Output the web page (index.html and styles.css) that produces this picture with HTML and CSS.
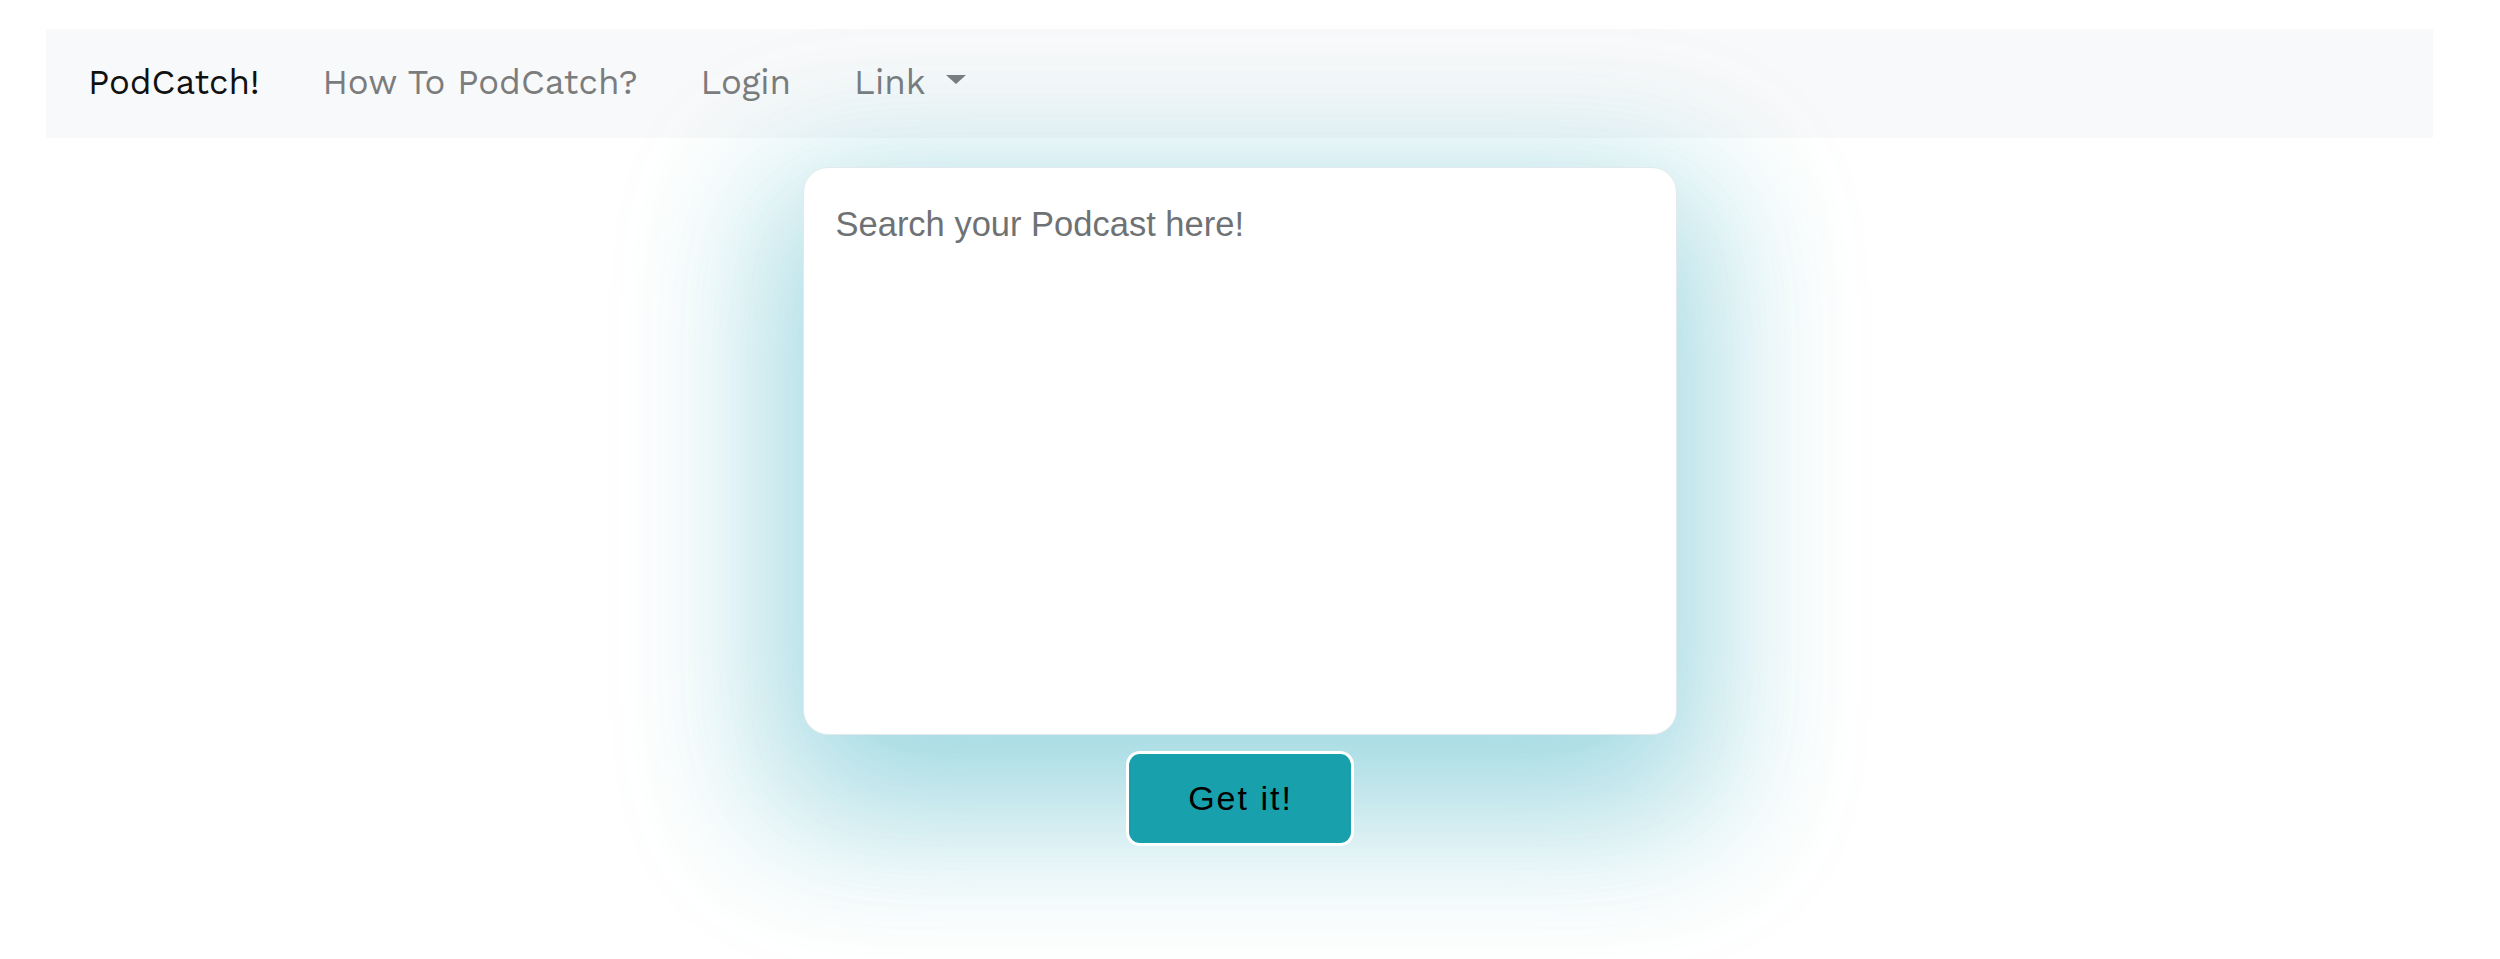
FILE: index.html
```html
<!DOCTYPE html>
<html lang="en">
<head>
<meta charset="utf-8">
<title>PodCatch!</title>
<link rel="stylesheet" href="styles.css">
</head>
<body>
  <div class="page">
    <nav class="navbar">
      <a class="brand" href="#">PodCatch!</a>
      <a class="nav-link" href="#">How To PodCatch?</a>
      <a class="nav-link" href="#">Login</a>
      <a class="nav-link dropdown" href="#">Link<span class="caret"></span></a>
    </nav>
    <main class="main">
      <textarea class="search" placeholder="Search your Podcast here!"></textarea>
      <button class="btn" type="button">Get it!</button>
    </main>
  </div>
</body>
</html>
```

FILE: styles.css
```css
html, body {
  margin: 0;
  padding: 0;
  background: #ffffff;
}

body {
  font-family: "Work Sans", "Open Sans", sans-serif;
  overflow: hidden;
  height: 959px;
}

.page {
  margin: 0 67px 0 46px;
  padding-top: 29px;
}

.navbar {
  height: 109px;
  background: #f8f9fa;
  display: flex;
  align-items: center;
  padding-left: 42px;
  gap: 63px;
  box-sizing: border-box;
}

.brand,
.nav-link {
  font-size: 34.8px;
  line-height: 1.5;
  text-decoration: none;
  white-space: nowrap;
  margin-top: -2px;
}

.brand {
  color: #111111;
}

.nav-link {
  color: #7b7c7d;
}

.dropdown {
  display: flex;
  align-items: center;
}

.caret {
  display: inline-block;
  width: 0;
  height: 0;
  margin-left: 21px;
  margin-bottom: 6px;
  border-top: 9px solid #7b7c7d;
  border-left: 10.5px solid transparent;
  border-right: 10.5px solid transparent;
}

.main {
  display: flex;
  flex-direction: column;
  align-items: center;
  padding-top: 29px;
  gap: 16px;
}

.search {
  display: block;
  width: 874px;
  height: 568px;
  box-sizing: border-box;
  margin: 0;
  padding: 31px 32px;
  border: 1px solid #e2e8ec;
  border-radius: 25px;
  background: #ffffff;
  font-family: "Liberation Sans", Arial, sans-serif;
  font-size: 34.5px;
  line-height: 1.5;
  color: #333333;
  resize: none;
  outline: none;
  box-shadow:
    0 50px 140px 10px rgba(23, 162, 184, 0.34),
    0 50px 140px 70px rgba(23, 162, 184, 0.12);
}

.search::placeholder {
  color: #6f7275;
  opacity: 1;
}

.btn {
  width: 228px;
  height: 95px;
  box-sizing: border-box;
  border: 3px solid #ffffff;
  border-radius: 14px;
  background: #19a0ad;
  color: #000000;
  font-family: "Liberation Sans", Arial, sans-serif;
  font-size: 34px;
  letter-spacing: 2px;
  padding: 0 0 0 2px;
  cursor: pointer;
}
```
